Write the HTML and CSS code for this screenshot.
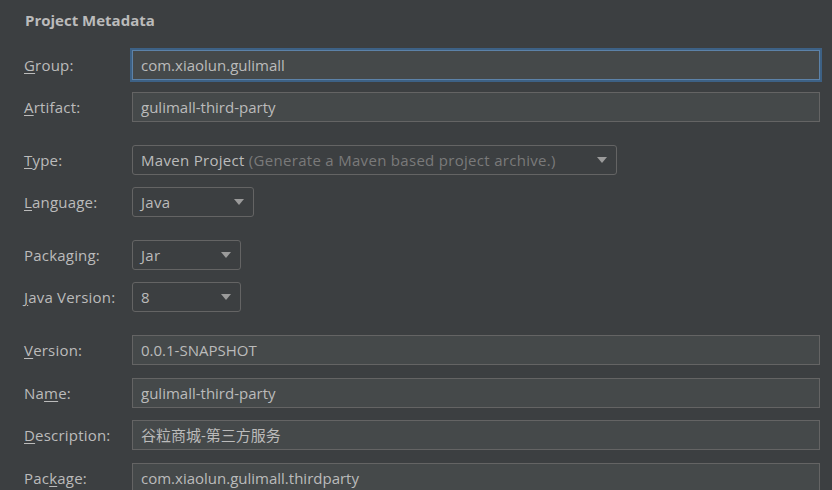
FILE: index.html
```html
<!DOCTYPE html>
<html>
<head>
<meta charset="utf-8">
<link rel="stylesheet" href="styles.css">
</head>
<body>
<div class="panel">
  <div class="title">Project Metadata</div>

  <div class="group">
    <div class="label"><u>G</u>roup:</div>
    <div class="field focused">com.xiaolun.gulimall</div>
    <div class="label"><u>A</u>rtifact:</div>
    <div class="field">gulimall-third-party</div>
  </div>

  <div class="group">
    <div class="label"><u>T</u>ype:</div>
    <div class="combo w-type"><span class="val">Maven Project <span class="hint">(Generate a Maven based project archive.)</span></span><span class="arrow"></span></div>
    <div class="label"><u>L</u>anguage:</div>
    <div class="combo w-lang"><span class="val">Java</span><span class="arrow"></span></div>
  </div>

  <div class="group">
    <div class="label">Packa<u>g</u>ing:</div>
    <div class="combo w-pack"><span class="val">Jar</span><span class="arrow"></span></div>
    <div class="label"><u>J</u>ava Version:</div>
    <div class="combo w-pack"><span class="val">8</span><span class="arrow"></span></div>
  </div>

  <div class="group last">
    <div class="label"><u>V</u>ersion:</div>
    <div class="field">0.0.1-SNAPSHOT</div>
    <div class="label">Na<u>m</u>e:</div>
    <div class="field">gulimall-third-party</div>
    <div class="label"><u>D</u>escription:</div>
    <div class="field">谷粒商城-第三方服务</div>
    <div class="label">Pac<u>k</u>age:</div>
    <div class="field">com.xiaolun.gulimall.thirdparty</div>
  </div>
</div>
</body>
</html>
```

FILE: styles.css
```css
html, body {
  margin: 0;
  padding: 0;
  background: #3c3f41;
  width: 832px;
  height: 490px;
  overflow: hidden;
}
body {
  font-family: "Open Sans", "Noto Sans CJK SC", sans-serif;
  font-size: 15px;
  color: #bbbbbb;
}
.panel {
  padding: 0 12px 0 24px;
}
.title {
  font-weight: bold;
  font-size: 15px;
  line-height: 20px;
  padding-top: 10px;
  padding-left: 1px;
  margin-bottom: 20px;
}
.group {
  display: grid;
  grid-template-columns: 108px 1fr;
  row-gap: 12px;
  align-items: center;
  margin-bottom: 23px;
}
.group.last {
  row-gap: 12.5px;
}
.label {
  line-height: 20px;
  white-space: nowrap;
  letter-spacing: 0.2px;
}
.label u {
  text-underline-offset: 2px;
}
.field {
  height: 30px;
  box-sizing: border-box;
  border: 1px solid #646464;
  background: #45494a;
  padding: 0 8px;
  line-height: 28px;
  white-space: nowrap;
}
.field.focused {
  border-color: #5c82a8;
  box-shadow: 0 0 0 2px #3d6185;
}
.combo {
  height: 30px;
  box-sizing: border-box;
  border: 1px solid #646464;
  border-radius: 3px;
  padding: 0 8px;
  line-height: 28px;
  display: flex;
  align-items: center;
  justify-content: space-between;
  white-space: nowrap;
}
.val {
  letter-spacing: 0.3px;
}
.w-type { width: 485px; }
.w-lang { width: 122px; }
.w-pack { width: 109px; }
.hint { color: #7a7a7a; }
.arrow {
  width: 0;
  height: 0;
  border-left: 5px solid transparent;
  border-right: 5px solid transparent;
  border-top: 6px solid #9b9b9b;
  margin-right: 1px;
}
```
